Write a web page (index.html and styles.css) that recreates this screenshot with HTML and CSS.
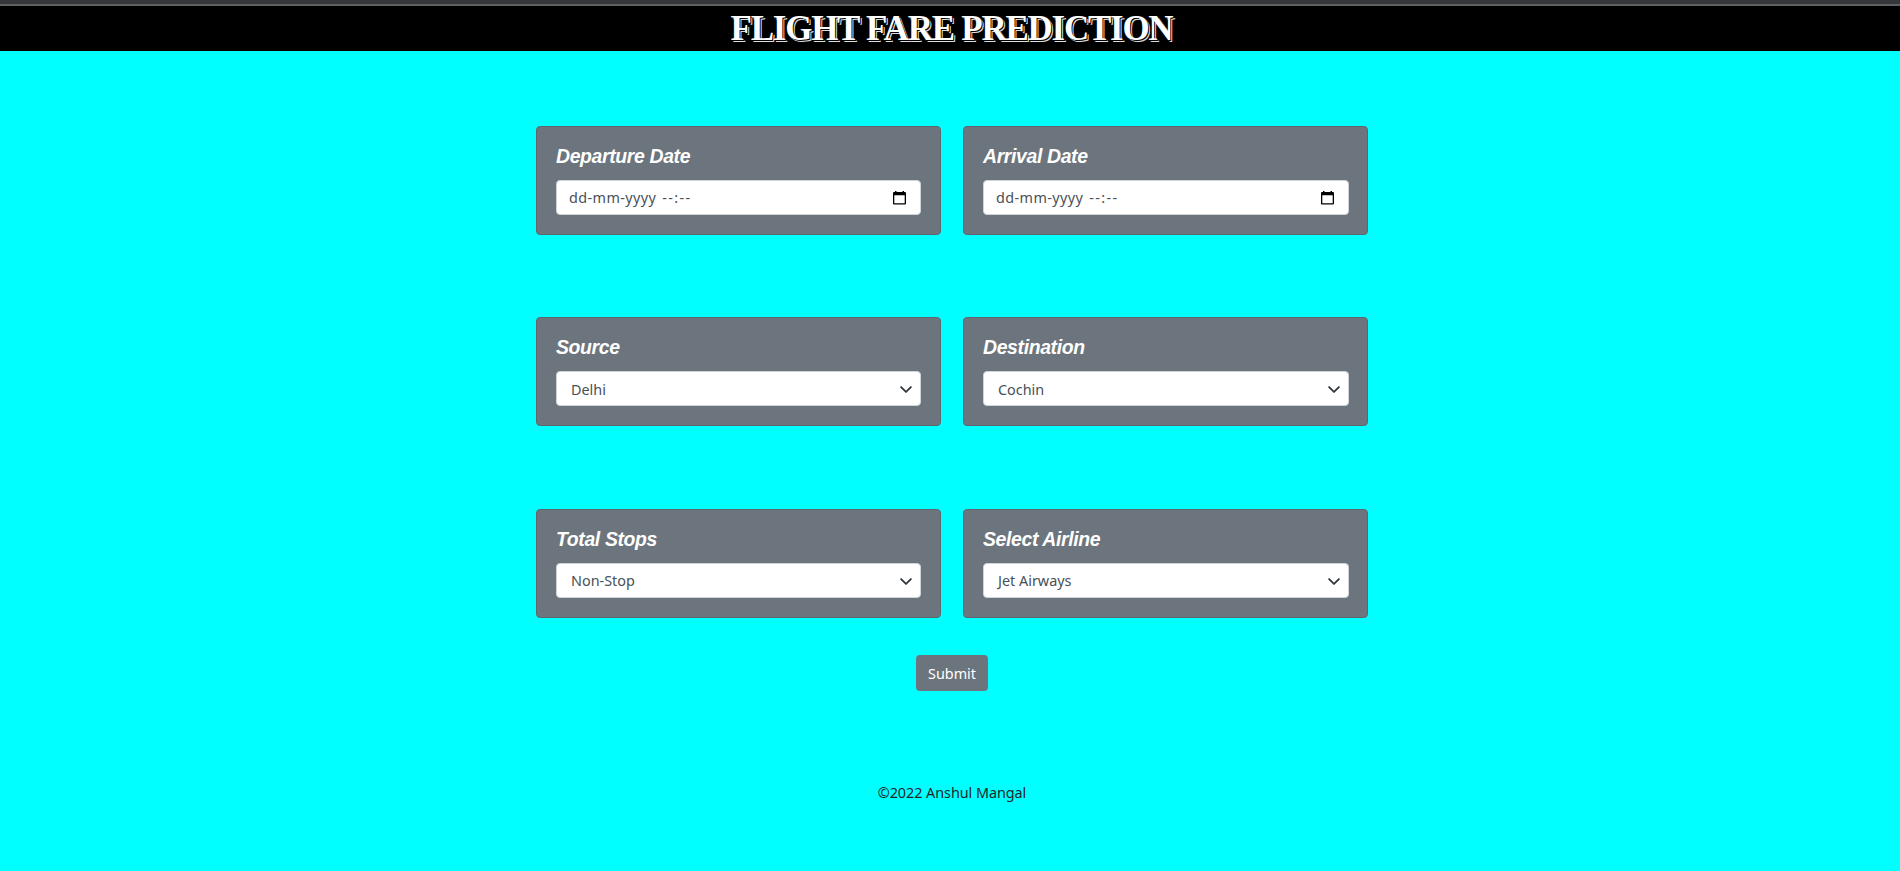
FILE: index.html
```html
<!DOCTYPE html>
<html lang="en">
<head>
<meta charset="utf-8">
<title>Flight Fare Prediction</title>
<link rel="stylesheet" href="styles.css">
</head>
<body>
<header class="header"><h1 class="title">FLIGHT FARE PREDICTION</h1></header>
<main class="form">
  <section class="card">
    <h2 class="label">Departure Date</h2>
    <div class="control date"><span class="date-text"><span class="date-day">dd-mm-yyyy</span><span class="date-time">--:--</span></span>
      <svg class="calendar" viewBox="0 0 13 14"><path fill="#000" fill-rule="evenodd" d="M2 0h1.500v1h6V0H11v1h1q1 0 1 1v10.500q0 1-1 1H1q-1 0-1-1V2q0-1 1-1h1zM1.300 4.300v8h10.400v-8z"/></svg></div>
  </section>
  <section class="card">
    <h2 class="label">Arrival Date</h2>
    <div class="control date"><span class="date-text"><span class="date-day">dd-mm-yyyy</span><span class="date-time">--:--</span></span>
      <svg class="calendar" viewBox="0 0 13 14"><path fill="#000" fill-rule="evenodd" d="M2 0h1.500v1h6V0H11v1h1q1 0 1 1v10.500q0 1-1 1H1q-1 0-1-1V2q0-1 1-1h1zM1.300 4.300v8h10.400v-8z"/></svg></div>
  </section>
  <section class="card">
    <h2 class="label">Source</h2>
    <div class="control select"><span>Delhi</span><svg class="chevron" viewBox="0 0 16 16"><path d="m2 5 6 6 6-6"/></svg></div>
  </section>
  <section class="card">
    <h2 class="label">Destination</h2>
    <div class="control select"><span>Cochin</span><svg class="chevron" viewBox="0 0 16 16"><path d="m2 5 6 6 6-6"/></svg></div>
  </section>
  <section class="card">
    <h2 class="label">Total Stops</h2>
    <div class="control select"><span>Non-Stop</span><svg class="chevron" viewBox="0 0 16 16"><path d="m2 5 6 6 6-6"/></svg></div>
  </section>
  <section class="card">
    <h2 class="label">Select Airline</h2>
    <div class="control select"><span>Jet Airways</span><svg class="chevron" viewBox="0 0 16 16"><path d="m2 5 6 6 6-6"/></svg></div>
  </section>
</main>
<button class="submit" type="button">Submit</button>
<footer class="footer">©2022 Anshul Mangal</footer>
</body>
</html>
```
FILE: styles.css
```css
* { box-sizing: border-box; }
body {
  margin: 0;
  height: 871px;
  overflow: hidden;
  display: flex;
  flex-direction: column;
  align-items: center;
  background: #0ff;
  font-family: "Noto Sans", sans-serif;
  font-size: 14.4px;
}
.header {
  width: 100%;
  height: 51px;
  border-top: 4px solid #35363a;
  background: linear-gradient(#5f6064 2px, #000 2px);
  text-align: center;
}
.title {
  margin: 0;
  padding: 3px 0 0 3px;
  color: #fff;
  font: bold 35px/44px "Liberation Serif", serif;
  letter-spacing: -1.25px;
  text-shadow: 1px 1px 0 #000, 2px 2px 0 #ddd;
}
.form {
  display: grid;
  grid-template-columns: 405px 405px;
  grid-auto-rows: 109px;
  gap: 82.3px 22px;
  margin: 75px 0 0 4px;
}
.card {
  padding: 16px 19px;
  border: 1px solid #5f666d;
  border-radius: 4px;
  background: #6c757d;
}
.card:nth-child(even) { padding-right: 18px; }
.label {
  margin: 0 0 10px;
  color: #fff;
  font: italic bold 19.4px/27px "Liberation Sans", sans-serif;
  letter-spacing: -0.35px;
}
.control {
  display: flex;
  align-items: center;
  justify-content: space-between;
  height: 35px;
  border: 1px solid #ced4da;
  border-radius: 4px;
  background: #fff;
  color: #495057;
}
.date { padding: 0 14px 0 12px; }
.date-text { display: flex; gap: 6px; }
.date-day { letter-spacing: 0.4px; }
.date-time { letter-spacing: 1.4px; }
.calendar { width: 13px; height: 14px; }
.select { padding: 0 7px 0 14px; }
.select span { padding-top: 1px; }
.chevron {
  width: 14px;
  height: 13px;
  margin-top: 2px;
  fill: none;
  stroke: #343a40;
  stroke-width: 2.3;
  stroke-linecap: round;
  stroke-linejoin: round;
}
.submit {
  width: 72px;
  height: 36px;
  margin: 37px 0 0 4px;
  padding: 1px 0 0;
  border: 0;
  border-radius: 4px;
  background: #6c757d;
  color: #fff;
  font: inherit;
}
.footer {
  margin: 91px 0 0 4px;
  color: #212529;
  line-height: 22px;
  letter-spacing: -0.05px;
}
```
